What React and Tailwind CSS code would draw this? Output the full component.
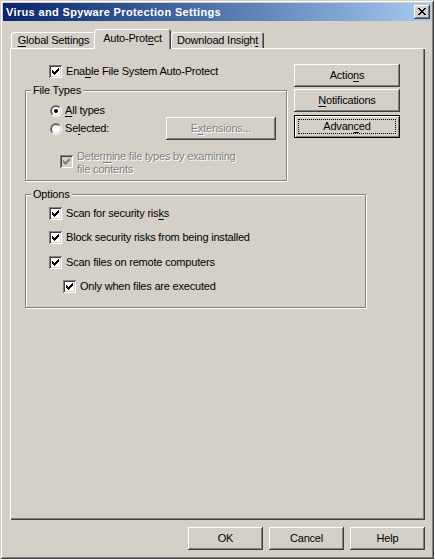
import React from 'react';

const FONT = { fontFamily: '"Liberation Sans", Arial, sans-serif' };

const RAISED = 'shadow-[inset_-1px_-1px_0_#404040,inset_1px_1px_0_#ffffff,inset_-2px_-2px_0_#808080]';
const DISABLED_TEXT = 'text-[#808080] [text-shadow:1px_1px_0_#ffffff]';

const CHECK_PIXELS = [
  [3, 5], [4, 6], [5, 7], [6, 6], [7, 5], [8, 4], [9, 3]
];

const CLOSE_ROWS = [
  'xx....xx',
  '.xx..xx.',
  '..xxxx..',
  '...xx...',
  '..xxxx..',
  '.xx..xx.',
  'xx....xx'
];

function Mn({ children }) {
  return <span className="underline decoration-1 underline-offset-[2px]">{children}</span>;
}

function Check({ checked = true, disabled = false }) {
  return (
    <span
      className={`block shrink-0 w-[13px] h-[13px] shadow-[inset_1px_1px_0_#808080,inset_-1px_-1px_0_#ffffff,inset_2px_2px_0_#404040,inset_-2px_-2px_0_#d4d0c8] ${
        disabled ? 'bg-[#d4d0c8]' : 'bg-white'
      }`}
    >
      {checked && (
        <svg width="13" height="13" viewBox="0 0 13 13" shapeRendering="crispEdges">
          {CHECK_PIXELS.map(([x, y]) => (
            <rect key={x} x={x} y={y} width="1" height="3" fill={disabled ? '#808080' : '#000'} />
          ))}
        </svg>
      )}
    </span>
  );
}

function Radio({ checked }) {
  return (
    <span className="shrink-0 w-[12px] h-[12px] rounded-full border border-t-[#808080] border-l-[#808080] border-r-white border-b-white flex items-center justify-center">
      <span className="w-[10px] h-[10px] rounded-full border border-t-[#404040] border-l-[#404040] border-r-[#d4d0c8] border-b-[#d4d0c8] bg-white flex items-center justify-center">
        {checked && <span className="w-[4px] h-[4px] rounded-full bg-black" />}
      </span>
    </span>
  );
}

function Btn({ children, className = '', isDefault = false, disabled = false }) {
  if (isDefault) {
    return (
      <div className={`h-[23px] border border-black bg-[#d4d0c8] shadow-[inset_1px_1px_0_#ffffff,inset_-1px_-1px_0_#808080] flex ${className}`}>
        <div className="flex-1 m-[3px] border border-dotted border-black flex items-center justify-center">
          {children}
        </div>
      </div>
    );
  }
  return (
    <div
      className={`h-[23px] bg-[#d4d0c8] ${RAISED} flex items-center justify-center ${
        disabled ? DISABLED_TEXT : ''
      } ${className}`}
    >
      {children}
    </div>
  );
}

function CheckRow({ children, className = '', disabled = false }) {
  return (
    <div className={`h-[13px] flex items-center gap-[4px] ${className}`}>
      <Check disabled={disabled} />
      <span className={disabled ? DISABLED_TEXT : ''}>{children}</span>
    </div>
  );
}

function Group({ title, className = '', children }) {
  return (
    <fieldset className={`m-0 p-0 min-w-0 border border-[#808080] shadow-[inset_1px_1px_0_#ffffff,1px_1px_0_#ffffff] ${className}`}>
      <legend className="ml-[5px] px-[2px] leading-[13px] bg-[#d4d0c8]">{title}</legend>
      {children}
    </fieldset>
  );
}

function Tab({ children, selected = false, className = '' }) {
  return (
    <div
      className={`flex items-center justify-center rounded-t-[3px] bg-[#d4d0c8] shadow-[inset_1px_1px_0_#ffffff,inset_-1px_0_0_#404040,inset_-2px_0_0_#808080] ${
        selected ? 'relative z-10 h-[20px] -mb-[1px] pb-[1px]' : 'h-[16px]'
      } ${className}`}
    >
      {children}
    </div>
  );
}

export default function App() {
  return (
    <div className="w-[435px] h-[560px] bg-white text-[11px] leading-[13px] tracking-[-0.2px] text-black" style={FONT}>
      <div className="w-[434px] h-[559px] bg-[#d4d0c8] p-[3px] flex flex-col shadow-[inset_1px_1px_0_#d4d0c8,inset_-1px_-1px_0_#404040,inset_2px_2px_0_#ffffff,inset_-2px_-2px_0_#808080]">
        {/* title bar */}
        <div className="h-[18px] shrink-0 flex items-center pl-[3px] pr-[1px] bg-gradient-to-r from-[#0a246a] to-[#a6caf0]">
          <span className="font-bold text-white tracking-[0.35px]">Virus and Spyware Protection Settings</span>
          <div className={`ml-auto w-[16px] h-[14px] bg-[#d4d0c8] ${RAISED}`}>
            <svg width="16" height="14" viewBox="0 0 16 14" shapeRendering="crispEdges">
              {CLOSE_ROWS.flatMap((row, y) =>
                row.split('').map((c, x) =>
                  c === 'x' ? <rect key={`${x}-${y}`} x={x + 4} y={y + 3} width="1" height="1" fill="#000" /> : null
                )
              )}
            </svg>
          </div>
        </div>

        <div className="pl-[7px] pr-[6px] flex flex-col">
          {/* tabs */}
          <div className="mt-[8px] h-[19px] flex items-end pl-[1px]">
            <Tab className="w-[85px]">
              <span><Mn>G</Mn>lobal Settings</span>
            </Tab>
            <Tab selected className="w-[77px] -ml-[2px]">
              <span>Auto-Prot<Mn>e</Mn>ct</span>
            </Tab>
            <Tab className="w-[93px]">
              <span>Download Insigh<Mn>t</Mn></span>
            </Tab>
          </div>

          {/* panel */}
          <div className="h-[472px] bg-[#d4d0c8] shadow-[inset_1px_1px_0_#ffffff,inset_-1px_-1px_0_#404040,inset_-2px_-2px_0_#808080] pl-[15px] pt-[16px]">
            <div className="flex">
              <div className="w-[262px] flex flex-col">
                <CheckRow className="mt-[1px] pl-[24px]">
                  Ena<Mn>b</Mn>le File System Auto-Protect
                </CheckRow>

                <Group title="File Types" className="mt-[6px] h-[97px]">
                  <div className="mt-[7px] h-[13px] pl-[24px] flex items-center gap-[3px]">
                    <Radio checked />
                    <span><Mn>A</Mn>ll types</span>
                  </div>
                  <div className="h-[23px] flex items-center">
                    <div className="w-[140px] pl-[24px] flex items-center gap-[3px]">
                      <Radio />
                      <span>Se<Mn>l</Mn>ected:</span>
                    </div>
                    <Btn disabled className="w-[110px]">
                      <span>E<Mn>x</Mn>tensions...</span>
                    </Btn>
                  </div>
                  <div className="mt-[10px] pl-[34px] flex items-start gap-[4px]">
                    <span className="mt-[5px]">
                      <Check disabled />
                    </span>
                    <span className={DISABLED_TEXT}>
                      Deter<Mn>m</Mn>ine file types by examining
                      <br />
                      file contents
                    </span>
                  </div>
                </Group>
              </div>

              <div className="ml-[7px] w-[106px] flex flex-col">
                <Btn>
                  <span>Actio<Mn>n</Mn>s</span>
                </Btn>
                <Btn className="mt-[2px]">
                  <span><Mn>N</Mn>otifications</span>
                </Btn>
                <Btn isDefault className="mt-[3px]">
                  <span>Advan<Mn>c</Mn>ed</span>
                </Btn>
              </div>
            </div>

            <Group title="Options" className="mt-[7px] w-[341px] h-[120px]">
              <CheckRow className="mt-[6px] pl-[23px]">
                Scan for security ris<Mn>k</Mn>s
              </CheckRow>
              <CheckRow className="mt-[11px] pl-[23px]">Block security risks from being installed</CheckRow>
              <CheckRow className="mt-[12px] pl-[23px]">Scan files on remote computers</CheckRow>
              <CheckRow className="mt-[11px] pl-[37px]">Only when files are executed</CheckRow>
            </Group>
          </div>

          {/* footer */}
          <div className="mt-[7px] flex justify-end gap-[6px]">
            <Btn className="w-[75px]">OK</Btn>
            <Btn className="w-[75px]">Cancel</Btn>
            <Btn className="w-[75px]">Help</Btn>
          </div>
        </div>
      </div>
    </div>
  );
}
